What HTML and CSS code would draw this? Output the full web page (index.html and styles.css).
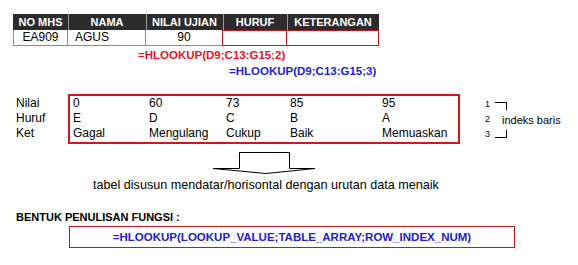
FILE: index.html
```html
<!DOCTYPE html>
<html>
<head>
<meta charset="utf-8">
<link rel="stylesheet" href="styles.css">
</head>
<body>
<div class="page">
  <div class="sheet">
    <div class="th">NO MHS</div>
    <div class="th">NAMA</div>
    <div class="th">NILAI UJIAN</div>
    <div class="th">HURUF</div>
    <div class="th">KETERANGAN</div>
    <div class="td td-first center">EA909</div>
    <div class="td">AGUS</div>
    <div class="td center">90</div>
    <div class="td td-red"></div>
    <div class="td td-red"></div>
  </div>
  <div class="formula formula-red">=HLOOKUP(D9;C13:G15;2)</div>
  <div class="formula formula-blue">=HLOOKUP(D9;C13:G15;3)</div>

  <div class="lookup">
    <div class="labels">
      <div>Nilai</div>
      <div>Huruf</div>
      <div>Ket</div>
    </div>
    <div class="range">
      <div>0</div><div>60</div><div>73</div><div>85</div><div>95</div>
      <div>E</div><div>D</div><div>C</div><div>B</div><div>A</div>
      <div>Gagal</div><div>Mengulang</div><div>Cukup</div><div>Baik</div><div>Memuaskan</div>
    </div>
    <div class="index">
      <div class="index-nums">
        <div>1</div>
        <div>2</div>
        <div>3</div>
      </div>
      <div class="index-note">
        <svg class="bracket bracket-top" width="12" height="8" viewBox="0 0 12 8"><path d="M0 0.5 H11.5 V8" fill="none" stroke="#000" stroke-width="1"/></svg>
        <div class="index-text">indeks baris</div>
        <svg class="bracket bracket-bottom" width="12" height="8" viewBox="0 0 12 8"><path d="M11.5 0 V7.5 H0" fill="none" stroke="#000" stroke-width="1"/></svg>
      </div>
    </div>
  </div>

  <svg class="arrow" width="104" height="24" viewBox="0 0 104 24">
    <polygon points="27.5,1.5 77.5,1.5 77.5,17.5 103,17.5 54,22.5 1,17.5 27.5,17.5" fill="#fff" stroke="#000" stroke-width="1"/>
  </svg>
  <div class="note">tabel disusun mendatar/horisontal dengan urutan data menaik</div>

  <div class="heading">BENTUK PENULISAN FUNGSI :</div>
  <div class="syntax">=HLOOKUP(LOOKUP_VALUE;TABLE_ARRAY;ROW_INDEX_NUM)</div>
</div>
</body>
</html>
```

FILE: styles.css
```css
html, body {
  margin: 0;
  padding: 0;
  background: #ffffff;
}

body {
  font-family: "Liberation Sans", Arial, sans-serif;
  color: #000;
}

.page {
  width: 578px;
  height: 265px;
  overflow: hidden;
}

.sheet {
  display: grid;
  grid-template-columns: 55px 78px 77px 64px 92px;
  grid-template-rows: 16px 16px;
  margin: 14px 0 0 13px;
  width: 366px;
}

.th {
  background: #2c2c2c;
  color: #ffffff;
  font-weight: bold;
  font-size: 11px;
  line-height: 16px;
  text-align: center;
  box-shadow: inset 1px 0 0 #9a9a9a;
}

.th:first-child {
  box-shadow: none;
}

.td {
  box-sizing: border-box;
  font-size: 12px;
  line-height: 15px;
  border-right: 1px solid #8c8c8c;
  border-bottom: 1px solid #8c8c8c;
  padding-left: 7px;
}

.td.center {
  text-align: center;
  padding-left: 0;
}

.td-first {
  border-left: 1px solid #8c8c8c;
}

.td-red {
  border: 1px solid #c3141c;
  border-left: none;
}

.td-red:nth-child(9) {
  border-left: 1px solid #c3141c;
  margin-left: -1px;
}

.formula {
  font-weight: bold;
  font-size: 11.5px;
  line-height: 16px;
  white-space: nowrap;
}

.formula-red {
  color: #e8141c;
  padding-left: 138px;
  margin-top: 1px;
}

.formula-blue {
  color: #1c1cd8;
  padding-left: 229px;
}

.lookup {
  display: flex;
  margin-top: 15px;
  font-size: 12px;
}

.labels {
  width: 52px;
  margin-left: 16px;
  padding-top: 2px;
  display: grid;
  grid-template-rows: 15px 15px 16px;
  line-height: 15px;
}

.range {
  width: 388px;
  border: 2px solid #d4151d;
  display: grid;
  grid-template-columns: 76px 77px 64px 92px 79px;
  grid-template-rows: 15px 15px 16px;
  line-height: 15px;
}

.range > div {
  padding-left: 3px;
  white-space: nowrap;
}

.index {
  display: flex;
  margin-left: 25px;
}

.index-nums {
  width: 10px;
  padding-top: 3px;
  display: grid;
  grid-template-rows: 15px 15px 15px;
  font-size: 9px;
  line-height: 15px;
}

.index-note {
  display: flex;
  flex-direction: column;
}

.bracket {
  display: block;
}

.bracket-top {
  margin-top: 8px;
}

.index-text {
  margin: 3px 0 0 7px;
  font-size: 11px;
  line-height: 15px;
  white-space: nowrap;
}

.bracket-bottom {
  margin-top: 2px;
}

.arrow {
  display: block;
  margin: 7px 0 0 212px;
}

.note {
  margin: 3px 0 0 93px;
  font-size: 12.6px;
  line-height: 14px;
  white-space: nowrap;
}

.heading {
  margin: 17px 0 0 16px;
  font-size: 11px;
  font-weight: bold;
  line-height: 16px;
}

.syntax {
  box-sizing: border-box;
  width: 446px;
  height: 22px;
  margin: 1px 0 0 69px;
  border: 1px solid #c8141e;
  color: #2020cc;
  font-weight: bold;
  font-size: 11.5px;
  line-height: 20px;
  text-align: center;
  white-space: nowrap;
}
```
